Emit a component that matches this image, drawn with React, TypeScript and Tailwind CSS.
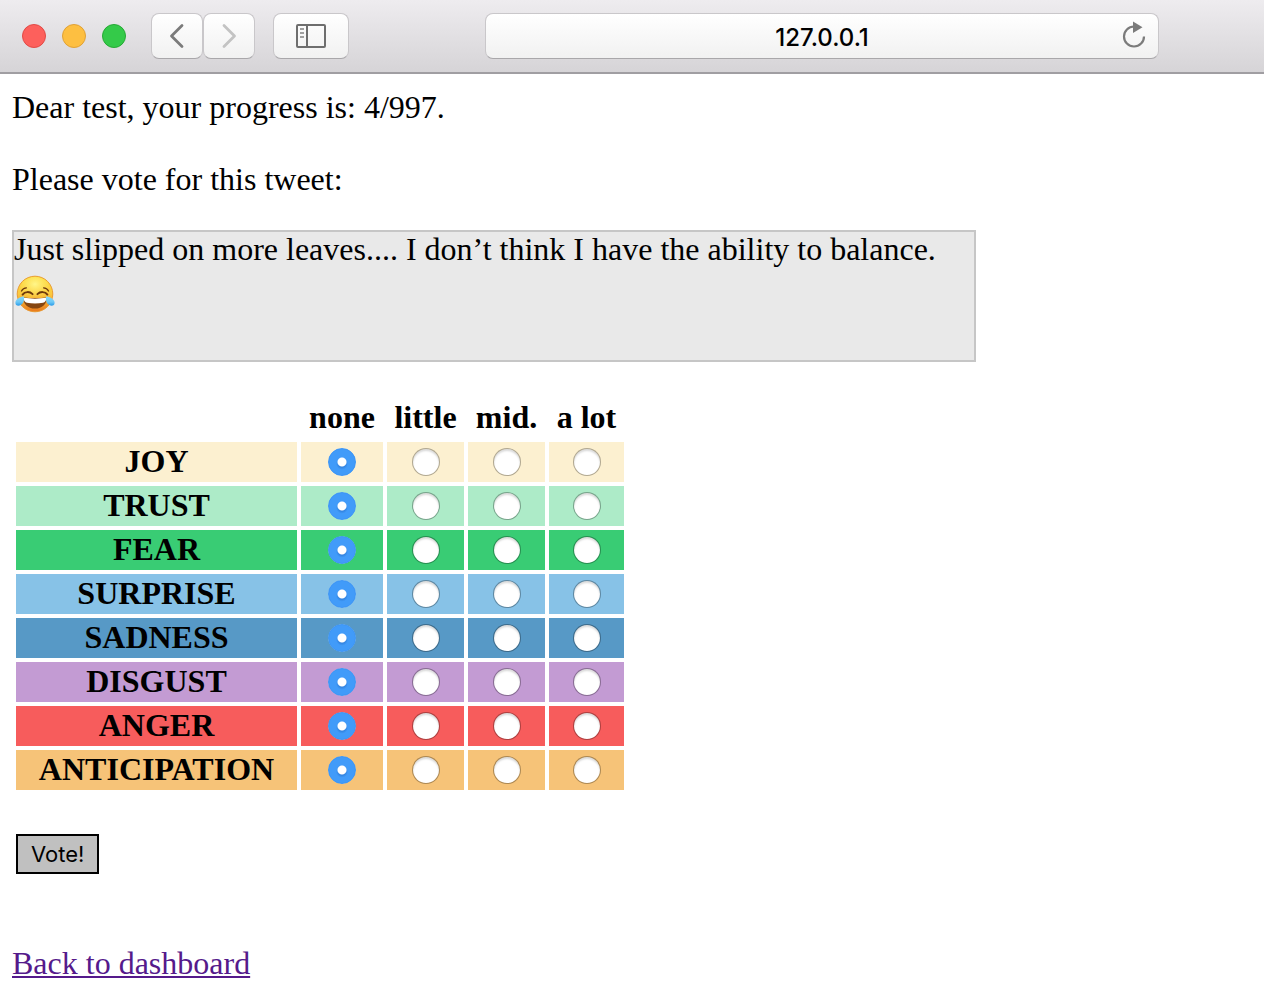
import { useState } from "react";

const levels = [
  { label: "none", width: "w-[82px]" },
  { label: "little", width: "w-[77px]" },
  { label: "mid.", width: "w-[77px]" },
  { label: "a lot", width: "w-[75px]" },
];

const emotions = [
  { name: "JOY", color: "bg-[#fcf0d0]" },
  { name: "TRUST", color: "bg-[#adebc8]" },
  { name: "FEAR", color: "bg-[#39cc74]" },
  { name: "SURPRISE", color: "bg-[#87c2e7]" },
  { name: "SADNESS", color: "bg-[#5799c6]" },
  { name: "DISGUST", color: "bg-[#c39bd3]" },
  { name: "ANGER", color: "bg-[#f75c5c]" },
  { name: "ANTICIPATION", color: "bg-[#f6c378]" },
];

const toolButton =
  "flex h-[46px] items-center justify-center rounded-lg border border-[#c9c7ca] border-b-[#a9a7aa] bg-linear-to-b from-white to-[#f1f1f1]";

function JoyTears() {
  return (
    <svg role="img" aria-label="face with tears of joy" viewBox="0 0 40 38" className="h-[38px] w-10">
      <defs>
        <linearGradient id="face" x1="0" y1="0" x2="0" y2="1">
          <stop offset="0" stopColor="#fcd93f" />
          <stop offset="0.5" stopColor="#fbc93f" />
          <stop offset="1" stopColor="#e8791c" />
        </linearGradient>
        <radialGradient id="shine" cx="0.5" cy="0.3" r="0.55">
          <stop offset="0" stopColor="#fff68a" />
          <stop offset="1" stopColor="#fff06a" stopOpacity="0" />
        </radialGradient>
        <linearGradient id="tear" x1="0" y1="0" x2="0" y2="1">
          <stop offset="0" stopColor="#8ad9f8" />
          <stop offset="0.6" stopColor="#6cc8f6" />
          <stop offset="1" stopColor="#2b9be8" />
        </linearGradient>
      </defs>
      <circle cx="20" cy="19" r="17.8" fill="url(#face)" stroke="#e8962a" strokeWidth="0.9" />
      <ellipse cx="20" cy="14" rx="15" ry="12" fill="url(#shine)" />
      <g fill="none" stroke="#6e3a0c" strokeLinecap="round">
        <path d="M7.6 19.6C9.8 16.4 14.6 16.2 17.6 19.2" strokeWidth="1.9" />
        <path d="M22.4 19.2C25.4 16.2 30.2 16.4 32.4 19.6" strokeWidth="1.9" />
        <path d="M6.5 16C7.5 14.2 9.2 13 11.4 12.8" strokeWidth="1.3" />
        <path d="M28.6 12.8C30.8 13 32.5 14.2 33.5 16" strokeWidth="1.3" />
      </g>
      <path d="M8 22.2C15.5 23.4 24.5 23.4 32 22.2C32 28.8 27.2 33.6 20 33.6C12.8 33.6 8 28.8 8 22.2Z" fill="#854510" />
      <path d="M8.6 22.8C16 23.9 24 23.9 31.4 22.8C31.2 26.2 30 27.4 28 27.7C23 28.6 17 28.6 12 27.7C10 27.4 8.8 26.2 8.6 22.8Z" fill="#fff" />
      <path d="M9 21.4C5.4 21.4 0.6 24 0.4 27.4C0.2 30.4 3 31.4 5.4 30.2C8.6 28.6 9.4 25 9 21.4Z" fill="url(#tear)" />
      <path d="M31 21.4C34.6 21.4 39.4 24 39.6 27.4C39.8 30.4 37 31.4 34.6 30.2C31.4 28.6 30.6 25 31 21.4Z" fill="url(#tear)" />
    </svg>
  );
}

function Toolbar() {
  return (
    <header className="flex h-[74px] items-center border-b-2 border-[#a09ea2] bg-linear-to-b from-[#eeecef] to-[#d6d4d7] pl-[22px]">
      <div className="flex gap-4">
        <button aria-label="Close window" className="size-6 rounded-full border border-[#e14a46] bg-[#fd605c]" />
        <button aria-label="Minimize window" className="size-6 rounded-full border border-[#e0a136] bg-[#fdbf41]" />
        <button aria-label="Zoom window" className="size-6 rounded-full border border-[#26a934] bg-[#34ca49]" />
      </div>
      <div className="ml-[25px] flex">
        <button aria-label="Back" className={`${toolButton} w-[52px]`}>
          <svg viewBox="0 0 16 26" className="h-[26px] w-4" fill="none" stroke="#7b7b7b" strokeWidth="2.8" strokeLinecap="round" strokeLinejoin="round">
            <path d="M13 2.5L2.5 13L13 23.5" />
          </svg>
        </button>
        <button aria-label="Forward" className={`${toolButton} w-[52px]`}>
          <svg viewBox="0 0 16 26" className="h-[26px] w-4" fill="none" stroke="#c3c3c3" strokeWidth="2.8" strokeLinecap="round" strokeLinejoin="round">
            <path d="M3 2.5L13.5 13L3 23.5" />
          </svg>
        </button>
      </div>
      <button aria-label="Show sidebar" className={`${toolButton} ml-[18px] w-[76px]`}>
        <svg viewBox="0 0 30 24" className="h-6 w-[30px]" fill="none" stroke="#6e6e6e" strokeWidth="2">
          <rect x="1" y="1" width="28" height="22" rx="1" />
          <path d="M11 1V23" />
          <path d="M4 5H8M4 9H8M4 13H8" stroke="#a0a0a0" />
        </svg>
      </button>
      <div className={`${toolButton} relative mr-[105px] ml-[136px] flex-1`}>
        <input
          aria-label="Address"
          defaultValue="127.0.0.1"
          className="h-full w-full bg-transparent pt-[2px] text-center font-['Inter','Liberation_Sans',sans-serif] text-[24px] font-medium text-black outline-none"
        />
        <button aria-label="Reload" className="absolute top-[7px] right-3">
          <svg viewBox="0 0 24 28" className="h-7 w-6">
            <path d="M22 15.5A10 10 0 1 1 12 5.5" fill="none" stroke="#7b7b7b" strokeWidth="2.2" />
            <path d="M11 0.5L20.5 6.2L11 12Z" fill="#7b7b7b" />
          </svg>
        </button>
      </div>
    </header>
  );
}

export default function App() {
  const [votes, setVotes] = useState<Record<string, string>>({});

  return (
    <div className="bg-white font-['Liberation_Serif','Times_New_Roman',serif] text-[32px] leading-[34px] text-black">
      <Toolbar />
      <main className="px-3 pt-4">
        <p>Dear test, your progress is: 4/997.</p>
        <p className="mt-[38px]">Please vote for this tweet:</p>
        <blockquote className="mt-[34px] h-[132px] w-full max-w-[964px] border-2 border-[#c6c6c6] bg-[#e9e9e9]">
          Just slipped on more leaves.... I don’t think I have the ability to balance.
          <span className="mt-[9px] ml-px block">
            <JoyTears />
          </span>
        </blockquote>
        <form className="mt-8" onSubmit={(e) => e.preventDefault()}>
          <table className="border-separate border-spacing-1">
            <thead>
              <tr>
                <td className="w-[281px]" />
                {levels.map(({ label, width }) => (
                  <th key={label} scope="col" className={`${width} px-0 pt-[2px] pb-1`}>
                    {label}
                  </th>
                ))}
              </tr>
            </thead>
            <tbody>
              {emotions.map(({ name, color }) => (
                <tr key={name}>
                  <th scope="row" className={`${color} pt-[2px] pb-1`}>
                    {name}
                  </th>
                  {levels.map(({ label }) => (
                    <td key={label} className={`${color} p-0`}>
                      <input
                        type="radio"
                        name={name}
                        aria-label={`${name} ${label}`}
                        checked={(votes[name] ?? "none") === label}
                        onChange={() => setVotes({ ...votes, [name]: label })}
                        className="mx-auto block size-7 appearance-none rounded-full border border-black/30 bg-white bg-clip-padding shadow-[inset_0_2px_2px_rgba(0,0,0,0.15)] checked:border-[#3b94f5] checked:bg-[radial-gradient(circle_at_50%_50%,white_4px,transparent_5px),radial-gradient(circle_at_50%_56%,#2f7fdc_3px,#419bf9_6px)] checked:bg-clip-border checked:bg-origin-border checked:shadow-none"
                      />
                    </td>
                  ))}
                </tr>
              ))}
            </tbody>
          </table>
          <button
            type="submit"
            className="mt-10 ml-1 block h-10 border-2 border-black bg-[#c0c0c0] px-[13px] font-['Inter','Liberation_Sans',sans-serif] text-[22px] leading-9"
          >
            Vote!
          </button>
        </form>
        <a href="#dashboard" className="mt-[72px] inline-block text-[#551a8b] underline decoration-2 underline-offset-2">
          Back to dashboard
        </a>
      </main>
    </div>
  );
}
